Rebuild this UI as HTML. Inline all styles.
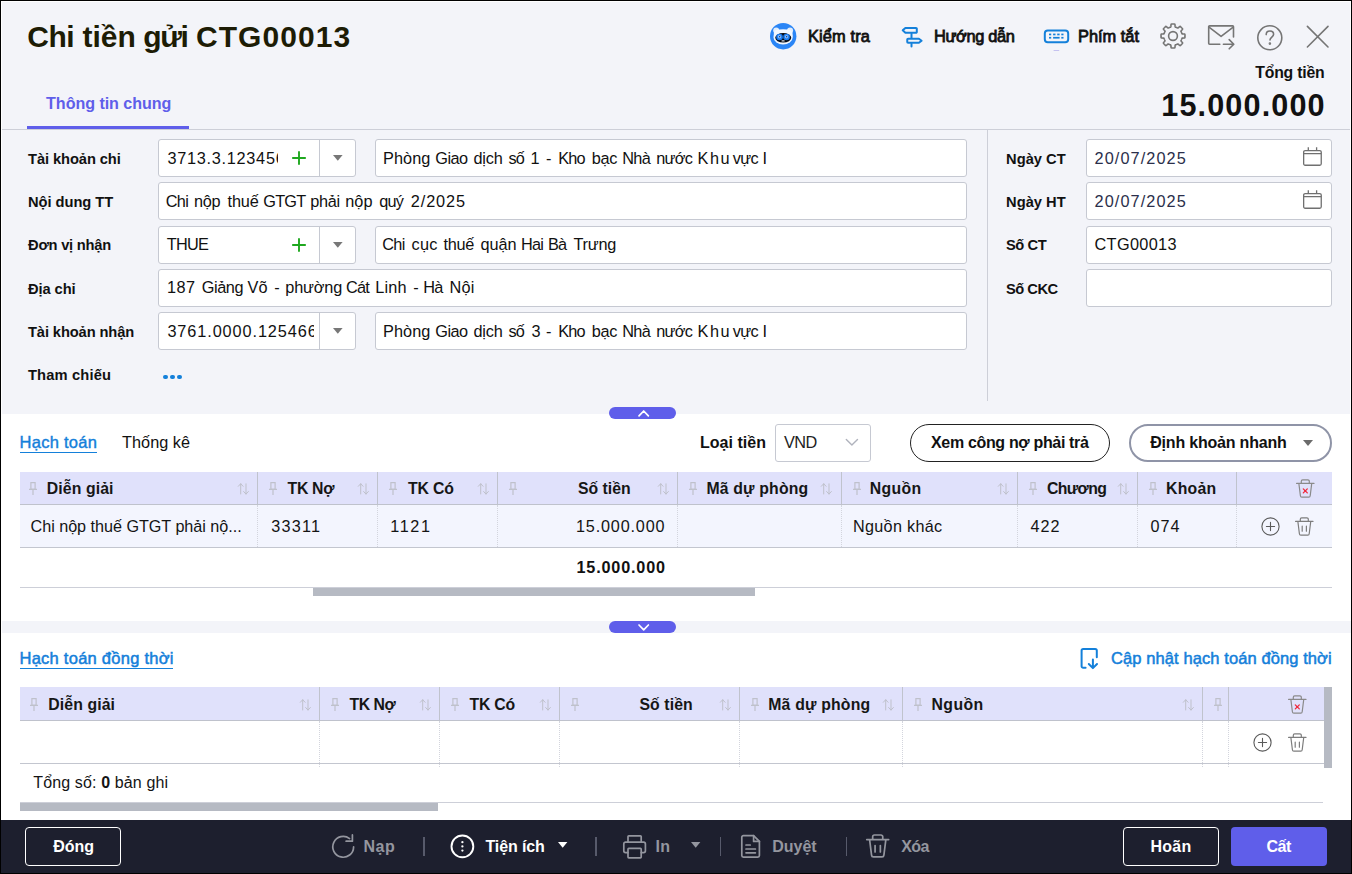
<!DOCTYPE html><html><head><meta charset="utf-8"><title>Chi tiền gửi CTG00013</title>
<style>
html,body{margin:0;padding:0}
body{width:1352px;height:874px;position:relative;overflow:hidden;background:#f3f4f9;font-family:"Liberation Sans", sans-serif;color:#141414}
.a{position:absolute}
.box{position:absolute;box-sizing:border-box;background:#fff;border:1px solid #c6c9d2;border-radius:3px}
svg{position:absolute;overflow:visible}
.hl{position:absolute;height:1px;background:#c6c9d2}
.vl{position:absolute;width:1px;background:#c6c9d2}
.vd{position:absolute;width:0;border-left:1px dotted #d3d5dd}
</style></head><body>
<div class="a" style="left:0;top:414px;width:1352px;height:207px;background:#fff"></div><div class="a" style="left:0;top:633px;width:1352px;height:187px;background:#fff"></div><div class="a" style="left:0;top:820px;width:1352px;height:54px;background:#1d1f2e"></div><span style="position:absolute;left:27.30px;top:22.00px;font-size:30px;line-height:30px;font-weight:700;color:#1d1c05;white-space:nowrap;letter-spacing:-0.520px;">Chi</span><span style="position:absolute;left:82.50px;top:22.00px;font-size:30px;line-height:30px;font-weight:700;color:#1d1c05;white-space:nowrap;">tiền</span><span style="position:absolute;left:143.20px;top:22.00px;font-size:30px;line-height:30px;font-weight:700;color:#1d1c05;white-space:nowrap;letter-spacing:-1.350px;">gửi</span><span style="position:absolute;left:196.00px;top:22.00px;font-size:30px;line-height:30px;font-weight:700;color:#1d1c05;white-space:nowrap;letter-spacing:1.062px;">CTG00013</span><svg style="left:769.85px;top:22.75px" width="26.4" height="26.4" viewBox="0 0 26.4 26.4">
<circle cx="13.2" cy="13.2" r="13.2" fill="#2a85f6"/>
<circle cx="6.2" cy="7.6" r="3" fill="#e0edfd"/><circle cx="20.1" cy="7.6" r="3" fill="#e0edfd"/>
<rect x="3.8" y="6.55" width="18.8" height="10" rx="4.2" fill="#f1f7ff"/>
<ellipse cx="13.1" cy="14" rx="9.7" ry="7.4" fill="#f1f7ff"/>
<ellipse cx="13.25" cy="14.8" rx="8" ry="4.8" fill="#050a14"/>
<circle cx="9.55" cy="13.95" r="3.3" fill="#1a7cf2"/><circle cx="16.55" cy="13.95" r="3.3" fill="#1a7cf2"/>
<circle cx="9.55" cy="13.8" r="1.7" fill="#86bdff"/><circle cx="16.55" cy="13.8" r="1.7" fill="#86bdff"/>
<circle cx="9.65" cy="13.7" r="0.65" fill="#1d2a55"/><circle cx="16.65" cy="13.7" r="0.65" fill="#1d2a55"/>
<rect x="11.5" y="17.3" width="3.2" height="1.2" rx="0.5" fill="#cdd5e0"/>
</svg><span style="position:absolute;left:808.05px;top:28.00px;font-size:16.4px;line-height:16.4px;font-weight:400;color:#111;white-space:nowrap;letter-spacing:0.106px;-webkit-text-stroke:0.8px #111;">Kiểm tra</span><svg style="left:900px;top:25px" width="24" height="24" viewBox="0 0 24 24" fill="none" stroke="#1480da" stroke-width="2" stroke-linejoin="round" stroke-linecap="round">
<path d="M5.4 2.9H16a.8.8 0 0 1 .8.8v3.2a.8.8 0 0 1-.8.8H5.4L2.7 5.3z"/>
<path d="M18.9 13.75H8.05a.8.8 0 0 0-.8.8v2.4a.8.8 0 0 0 .8.8H18.9l2.7-2z"/>
<path d="M11.5 8.7v4.1M11.5 18.7v2.9"/></svg><span style="position:absolute;left:933.90px;top:28.00px;font-size:16.4px;line-height:16.4px;font-weight:400;color:#111;white-space:nowrap;letter-spacing:-0.347px;-webkit-text-stroke:0.8px #111;">Hướng dẫn</span><svg style="left:1043px;top:28px" width="28" height="24" viewBox="0 0 28 24" fill="none">
<rect x="1.8" y="2.4" width="23.4" height="11.8" rx="3" stroke="#1480da" stroke-width="2"/>
<g fill="#1480da"><rect x="6" y="5.6" width="2.2" height="1.7"/><rect x="10.1" y="5.6" width="2.4" height="1.7"/><rect x="14.2" y="5.6" width="2.4" height="1.7"/><rect x="18.3" y="5.6" width="2.2" height="1.7"/>
<rect x="6" y="8.9" width="2.2" height="1.7"/><rect x="10.1" y="8.9" width="6.5" height="1.7"/><rect x="18.3" y="8.9" width="2.2" height="1.7"/></g>
<rect x="10.6" y="22" width="5.6" height="0.8" fill="#b9b6ee"/></svg><span style="position:absolute;left:1078.05px;top:28.00px;font-size:16.4px;line-height:16.4px;font-weight:400;color:#111;white-space:nowrap;letter-spacing:-0.011px;-webkit-text-stroke:0.8px #111;">Phím tắt</span><svg style="left:1160.4px;top:23.3px" width="26" height="26" viewBox="0 0 26 26" fill="none" stroke="#757575" stroke-width="1.6" stroke-linejoin="round">
<path d="M13.00 1.00 L13.31 1.00 L13.63 1.02 L13.94 1.04 L14.25 1.07 L14.57 1.10 L14.86 1.25 L15.03 2.05 L15.09 3.16 L15.17 3.96 L15.38 4.11 L15.61 4.18 L15.84 4.25 L16.07 4.33 L16.30 4.41 L16.52 4.50 L16.74 4.60 L16.96 4.70 L17.18 4.80 L17.39 4.91 L17.60 5.03 L17.86 5.07 L18.48 4.56 L19.31 3.82 L19.99 3.37 L20.31 3.48 L20.55 3.67 L20.79 3.88 L21.03 4.08 L21.26 4.30 L21.49 4.51 L21.70 4.74 L21.92 4.97 L22.12 5.21 L22.33 5.45 L22.52 5.69 L22.63 6.01 L22.18 6.69 L21.44 7.52 L20.93 8.14 L20.97 8.40 L21.09 8.61 L21.20 8.82 L21.30 9.04 L21.40 9.26 L21.50 9.48 L21.59 9.70 L21.67 9.93 L21.75 10.16 L21.82 10.39 L21.89 10.62 L22.04 10.83 L22.84 10.91 L23.95 10.97 L24.75 11.14 L24.90 11.43 L24.93 11.75 L24.96 12.06 L24.98 12.37 L25.00 12.69 L25.00 13.00 L25.00 13.31 L24.98 13.63 L24.96 13.94 L24.93 14.25 L24.90 14.57 L24.75 14.86 L23.95 15.03 L22.84 15.09 L22.04 15.17 L21.89 15.38 L21.82 15.61 L21.75 15.84 L21.67 16.07 L21.59 16.30 L21.50 16.52 L21.40 16.74 L21.30 16.96 L21.20 17.18 L21.09 17.39 L20.97 17.60 L20.93 17.86 L21.44 18.48 L22.18 19.31 L22.63 19.99 L22.52 20.31 L22.33 20.55 L22.12 20.79 L21.92 21.03 L21.70 21.26 L21.49 21.49 L21.26 21.70 L21.03 21.92 L20.79 22.12 L20.55 22.33 L20.31 22.52 L19.99 22.63 L19.31 22.18 L18.48 21.44 L17.86 20.93 L17.60 20.97 L17.39 21.09 L17.18 21.20 L16.96 21.30 L16.74 21.40 L16.52 21.50 L16.30 21.59 L16.07 21.67 L15.84 21.75 L15.61 21.82 L15.38 21.89 L15.17 22.04 L15.09 22.84 L15.03 23.95 L14.86 24.75 L14.57 24.90 L14.25 24.93 L13.94 24.96 L13.63 24.98 L13.31 25.00 L13.00 25.00 L12.69 25.00 L12.37 24.98 L12.06 24.96 L11.75 24.93 L11.43 24.90 L11.14 24.75 L10.97 23.95 L10.91 22.84 L10.83 22.04 L10.62 21.89 L10.39 21.82 L10.16 21.75 L9.93 21.67 L9.70 21.59 L9.48 21.50 L9.26 21.40 L9.04 21.30 L8.82 21.20 L8.61 21.09 L8.40 20.97 L8.14 20.93 L7.52 21.44 L6.69 22.18 L6.01 22.63 L5.69 22.52 L5.45 22.33 L5.21 22.12 L4.97 21.92 L4.74 21.70 L4.51 21.49 L4.30 21.26 L4.08 21.03 L3.88 20.79 L3.67 20.55 L3.48 20.31 L3.37 19.99 L3.82 19.31 L4.56 18.48 L5.07 17.86 L5.03 17.60 L4.91 17.39 L4.80 17.18 L4.70 16.96 L4.60 16.74 L4.50 16.52 L4.41 16.30 L4.33 16.07 L4.25 15.84 L4.18 15.61 L4.11 15.38 L3.96 15.17 L3.16 15.09 L2.05 15.03 L1.25 14.86 L1.10 14.57 L1.07 14.25 L1.04 13.94 L1.02 13.63 L1.00 13.31 L1.00 13.00 L1.00 12.69 L1.02 12.37 L1.04 12.06 L1.07 11.75 L1.10 11.43 L1.25 11.14 L2.05 10.97 L3.16 10.91 L3.96 10.83 L4.11 10.62 L4.18 10.39 L4.25 10.16 L4.33 9.93 L4.41 9.70 L4.50 9.48 L4.60 9.26 L4.70 9.04 L4.80 8.82 L4.91 8.61 L5.03 8.40 L5.07 8.14 L4.56 7.52 L3.82 6.69 L3.37 6.01 L3.48 5.69 L3.67 5.45 L3.88 5.21 L4.08 4.97 L4.30 4.74 L4.51 4.51 L4.74 4.30 L4.97 4.08 L5.21 3.88 L5.45 3.67 L5.69 3.48 L6.01 3.37 L6.69 3.82 L7.52 4.56 L8.14 5.07 L8.40 5.03 L8.61 4.91 L8.82 4.80 L9.04 4.70 L9.26 4.60 L9.48 4.50 L9.70 4.41 L9.93 4.33 L10.16 4.25 L10.39 4.18 L10.62 4.11 L10.83 3.96 L10.91 3.16 L10.97 2.05 L11.14 1.25 L11.43 1.10 L11.75 1.07 L12.06 1.04 L12.37 1.02 L12.69 1.00Z"/><circle cx="13" cy="13" r="4.4"/></svg><svg style="left:1207px;top:24px" width="30" height="28" viewBox="0 0 30 28" fill="none" stroke="#757575" stroke-width="1.6" stroke-linecap="round" stroke-linejoin="round">
<path d="M12.8 20.2H2.6a.9.9 0 0 1-.9-.9V2.8a.9.9 0 0 1 .9-.9h23a.9.9 0 0 1 .9.9V13"/>
<path d="M2 3.2l12.1 9.2L26.2 3.2"/>
<path d="M16.4 20.2h10.2M22.2 15.6l4.6 4.6-4.6 4.6"/></svg><svg style="left:1256px;top:23.6px" width="28" height="28" viewBox="0 0 28 28" fill="none" stroke="#757575" stroke-width="1.6" stroke-linecap="round">
<circle cx="13.8" cy="13.8" r="12"/><path d="M10.2 10.6c0-2.2 1.6-3.6 3.7-3.6 2.2 0 3.7 1.4 3.7 3.3 0 2.6-3.6 2.9-3.6 5.6"/><circle cx="13.9" cy="19.6" r="0.5" fill="#757575"/></svg><svg style="left:1306px;top:25px" width="24" height="24" viewBox="0 0 24 24" fill="none" stroke="#757575" stroke-width="1.6" stroke-linecap="round"><path d="M1.4 1.4l20.6 20.6M22 1.4L1.4 22"/></svg><span style="position:absolute;left:1255.25px;top:65.00px;font-size:15.8px;line-height:15.8px;font-weight:700;color:#111;white-space:nowrap;letter-spacing:-0.209px;">Tổng tiền</span><span style="position:absolute;left:1161.25px;top:90.00px;font-size:30.6px;line-height:30.6px;font-weight:700;color:#111;white-space:nowrap;letter-spacing:1.139px;">15.000.000</span><span style="position:absolute;left:46.10px;top:95.00px;font-size:16.1px;line-height:16.1px;font-weight:700;color:#5f5eea;white-space:nowrap;letter-spacing:-0.057px;">Thông tin chung</span><div class="a" style="left:0;top:129px;width:1352px;height:1px;background:#cdcfd8"></div><div class="a" style="left:27px;top:126px;width:162px;height:3px;background:#5f5eea"></div><span style="position:absolute;left:28.00px;top:152.00px;font-size:14.7px;line-height:14.7px;font-weight:700;color:#111;white-space:nowrap;letter-spacing:-0.085px;">Tài khoản chi</span><span style="position:absolute;left:28.00px;top:195.00px;font-size:14.7px;line-height:14.7px;font-weight:700;color:#111;white-space:nowrap;letter-spacing:-0.043px;">Nội dung TT</span><span style="position:absolute;left:28.00px;top:238.00px;font-size:14.7px;line-height:14.7px;font-weight:700;color:#111;white-space:nowrap;letter-spacing:-0.229px;">Đơn vị nhận</span><span style="position:absolute;left:28.00px;top:282.00px;font-size:14.7px;line-height:14.7px;font-weight:700;color:#111;white-space:nowrap;letter-spacing:-0.096px;">Địa chỉ</span><span style="position:absolute;left:28.00px;top:325.00px;font-size:14.7px;line-height:14.7px;font-weight:700;color:#111;white-space:nowrap;letter-spacing:-0.115px;">Tài khoản nhận</span><span style="position:absolute;left:28.00px;top:368.00px;font-size:14.7px;line-height:14.7px;font-weight:700;color:#111;white-space:nowrap;letter-spacing:0.151px;">Tham chiếu</span><div class="box" style="left:158px;top:139px;width:198px;height:38px"></div><div class="vl" style="left:319px;top:140px;height:36px"></div><div class="a" style="left:159px;top:140px;width:118.80000000000001px;height:36px;overflow:hidden"><span style="position:absolute;left:8.40px;top:10.00px;font-size:16.3px;line-height:16.3px;font-weight:400;color:#111;white-space:nowrap;letter-spacing:0.724px;">3713.3.123456</span></div><svg style="left:292px;top:151.0px" width="14" height="14" viewBox="0 0 14 14" stroke="#1fa81f" stroke-width="1.9" stroke-linecap="round"><path d="M7 0.9v12.2M0.9 7h12.2"/></svg><svg style="left:333.30px;top:155.10px" width="9.6" height="5.8" viewBox="0 0 9.6 5.8"><path d="M0 0H9.6L4.8 5.8z" fill="#777"/></svg><div class="box" style="left:375px;top:139px;width:592px;height:38px"></div><span style="position:absolute;left:383.00px;top:150.00px;font-size:16.3px;line-height:16.3px;font-weight:400;color:#111;white-space:nowrap;letter-spacing:0.056px;">Phòng</span><span style="position:absolute;left:435.25px;top:150.00px;font-size:16.3px;line-height:16.3px;font-weight:400;color:#111;white-space:nowrap;letter-spacing:-0.529px;">Giao</span><span style="position:absolute;left:473.50px;top:150.00px;font-size:16.3px;line-height:16.3px;font-weight:400;color:#111;white-space:nowrap;letter-spacing:-0.188px;">dịch</span><span style="position:absolute;left:508.42px;top:150.00px;font-size:16.3px;line-height:16.3px;font-weight:400;color:#111;white-space:nowrap;letter-spacing:-0.734px;">số</span><span style="position:absolute;left:530.50px;top:150.00px;font-size:16.3px;line-height:16.3px;font-weight:400;color:#111;white-space:nowrap;">1</span><span style="position:absolute;left:546.00px;top:150.00px;font-size:16.3px;line-height:16.3px;font-weight:400;color:#111;white-space:nowrap;">-</span><span style="position:absolute;left:558.15px;top:150.00px;font-size:16.3px;line-height:16.3px;font-weight:400;color:#111;white-space:nowrap;letter-spacing:-0.734px;">Kho</span><span style="position:absolute;left:591.75px;top:150.00px;font-size:16.3px;line-height:16.3px;font-weight:400;color:#111;white-space:nowrap;letter-spacing:-0.305px;">bạc</span><span style="position:absolute;left:622.33px;top:150.00px;font-size:16.3px;line-height:16.3px;font-weight:400;color:#111;white-space:nowrap;letter-spacing:-0.734px;">Nhà</span><span style="position:absolute;left:656.28px;top:150.00px;font-size:16.3px;line-height:16.3px;font-weight:400;color:#111;white-space:nowrap;letter-spacing:-0.734px;">nước</span><span style="position:absolute;left:697.50px;top:150.00px;font-size:16.3px;line-height:16.3px;font-weight:400;color:#111;white-space:nowrap;letter-spacing:1.543px;">Khu</span><span style="position:absolute;left:732.84px;top:150.00px;font-size:16.3px;line-height:16.3px;font-weight:400;color:#111;white-space:nowrap;letter-spacing:-0.734px;">vực</span><span style="position:absolute;left:762.60px;top:150.00px;font-size:16.3px;line-height:16.3px;font-weight:400;color:#111;white-space:nowrap;">I</span><div class="box" style="left:158px;top:182px;width:809px;height:38px"></div><span style="position:absolute;left:165.83px;top:193.00px;font-size:16.3px;line-height:16.3px;font-weight:400;color:#111;white-space:nowrap;letter-spacing:-0.734px;">Chi</span><span style="position:absolute;left:194.00px;top:193.00px;font-size:16.3px;line-height:16.3px;font-weight:400;color:#111;white-space:nowrap;letter-spacing:-0.305px;">nộp</span><span style="position:absolute;left:227.50px;top:193.00px;font-size:16.3px;line-height:16.3px;font-weight:400;color:#111;white-space:nowrap;letter-spacing:-0.128px;">thuế</span><span style="position:absolute;left:263.21px;top:193.00px;font-size:16.3px;line-height:16.3px;font-weight:400;color:#111;white-space:nowrap;letter-spacing:-0.734px;">GTGT</span><span style="position:absolute;left:310.25px;top:193.00px;font-size:16.3px;line-height:16.3px;font-weight:400;color:#111;white-space:nowrap;letter-spacing:-0.305px;">phải</span><span style="position:absolute;left:345.25px;top:193.00px;font-size:16.3px;line-height:16.3px;font-weight:400;color:#111;white-space:nowrap;letter-spacing:0.070px;">nộp</span><span style="position:absolute;left:379.18px;top:193.00px;font-size:16.3px;line-height:16.3px;font-weight:400;color:#111;white-space:nowrap;letter-spacing:-0.734px;">quý</span><span style="position:absolute;left:410.75px;top:193.00px;font-size:16.3px;line-height:16.3px;font-weight:400;color:#111;white-space:nowrap;letter-spacing:0.901px;">2/2025</span><div class="box" style="left:158px;top:226px;width:198px;height:38px"></div><div class="vl" style="left:319px;top:227px;height:36px"></div><div class="a" style="left:159px;top:227px;width:119px;height:36px;overflow:hidden"><span style="position:absolute;left:7.77px;top:9.00px;font-size:16.3px;line-height:16.3px;font-weight:400;color:#111;white-space:nowrap;letter-spacing:-0.734px;">THUE</span></div><svg style="left:292px;top:238.0px" width="14" height="14" viewBox="0 0 14 14" stroke="#1fa81f" stroke-width="1.9" stroke-linecap="round"><path d="M7 0.9v12.2M0.9 7h12.2"/></svg><svg style="left:333.30px;top:242.10px" width="9.6" height="5.8" viewBox="0 0 9.6 5.8"><path d="M0 0H9.6L4.8 5.8z" fill="#777"/></svg><div class="box" style="left:375px;top:226px;width:592px;height:38px"></div><span style="position:absolute;left:382.33px;top:236.00px;font-size:16.3px;line-height:16.3px;font-weight:400;color:#111;white-space:nowrap;letter-spacing:-0.734px;">Chi</span><span style="position:absolute;left:411.50px;top:236.00px;font-size:16.3px;line-height:16.3px;font-weight:400;color:#111;white-space:nowrap;letter-spacing:0.277px;">cục</span><span style="position:absolute;left:443.50px;top:236.00px;font-size:16.3px;line-height:16.3px;font-weight:400;color:#111;white-space:nowrap;letter-spacing:-0.294px;">thuế</span><span style="position:absolute;left:480.50px;top:236.00px;font-size:16.3px;line-height:16.3px;font-weight:400;color:#111;white-space:nowrap;letter-spacing:-0.055px;">quận</span><span style="position:absolute;left:520.95px;top:236.00px;font-size:16.3px;line-height:16.3px;font-weight:400;color:#111;white-space:nowrap;letter-spacing:-0.734px;">Hai</span><span style="position:absolute;left:547.94px;top:236.00px;font-size:16.3px;line-height:16.3px;font-weight:400;color:#111;white-space:nowrap;letter-spacing:-0.734px;">Bà</span><span style="position:absolute;left:573.50px;top:236.00px;font-size:16.3px;line-height:16.3px;font-weight:400;color:#111;white-space:nowrap;letter-spacing:-0.242px;">Trưng</span><div class="box" style="left:158px;top:269px;width:809px;height:38px"></div><span style="position:absolute;left:167.00px;top:279.00px;font-size:16.3px;line-height:16.3px;font-weight:400;color:#111;white-space:nowrap;letter-spacing:0.445px;">187</span><span style="position:absolute;left:201.75px;top:279.00px;font-size:16.3px;line-height:16.3px;font-weight:400;color:#111;white-space:nowrap;letter-spacing:-0.410px;">Giảng</span><span style="position:absolute;left:247.50px;top:279.00px;font-size:16.3px;line-height:16.3px;font-weight:400;color:#111;white-space:nowrap;letter-spacing:0.141px;">Võ</span><span style="position:absolute;left:274.25px;top:279.00px;font-size:16.3px;line-height:16.3px;font-weight:400;color:#111;white-space:nowrap;">-</span><span style="position:absolute;left:285.25px;top:279.00px;font-size:16.3px;line-height:16.3px;font-weight:400;color:#111;white-space:nowrap;letter-spacing:-0.148px;">phường</span><span style="position:absolute;left:345.95px;top:279.00px;font-size:16.3px;line-height:16.3px;font-weight:400;color:#111;white-space:nowrap;letter-spacing:-0.734px;">Cát</span><span style="position:absolute;left:375.25px;top:279.00px;font-size:16.3px;line-height:16.3px;font-weight:400;color:#111;white-space:nowrap;letter-spacing:0.174px;">Linh</span><span style="position:absolute;left:413.25px;top:279.00px;font-size:16.3px;line-height:16.3px;font-weight:400;color:#111;white-space:nowrap;">-</span><span style="position:absolute;left:423.24px;top:279.00px;font-size:16.3px;line-height:16.3px;font-weight:400;color:#111;white-space:nowrap;letter-spacing:-0.734px;">Hà</span><span style="position:absolute;left:449.50px;top:279.00px;font-size:16.3px;line-height:16.3px;font-weight:400;color:#111;white-space:nowrap;letter-spacing:0.219px;">Nội</span><div class="box" style="left:158px;top:312px;width:198px;height:38px"></div><div class="vl" style="left:319px;top:313px;height:36px"></div><div class="a" style="left:159px;top:313px;width:155px;height:36px;overflow:hidden"><span style="position:absolute;left:8.40px;top:10.00px;font-size:16.3px;line-height:16.3px;font-weight:400;color:#111;white-space:nowrap;letter-spacing:0.903px;">3761.0000.1254667</span></div><svg style="left:333.30px;top:328.10px" width="9.6" height="5.8" viewBox="0 0 9.6 5.8"><path d="M0 0H9.6L4.8 5.8z" fill="#777"/></svg><div class="box" style="left:375px;top:312px;width:592px;height:38px"></div><span style="position:absolute;left:383.00px;top:323.00px;font-size:16.3px;line-height:16.3px;font-weight:400;color:#111;white-space:nowrap;letter-spacing:0.056px;">Phòng</span><span style="position:absolute;left:435.25px;top:323.00px;font-size:16.3px;line-height:16.3px;font-weight:400;color:#111;white-space:nowrap;letter-spacing:-0.529px;">Giao</span><span style="position:absolute;left:473.50px;top:323.00px;font-size:16.3px;line-height:16.3px;font-weight:400;color:#111;white-space:nowrap;letter-spacing:-0.188px;">dịch</span><span style="position:absolute;left:508.42px;top:323.00px;font-size:16.3px;line-height:16.3px;font-weight:400;color:#111;white-space:nowrap;letter-spacing:-0.734px;">số</span><span style="position:absolute;left:531.50px;top:323.00px;font-size:16.3px;line-height:16.3px;font-weight:400;color:#111;white-space:nowrap;">3</span><span style="position:absolute;left:546.00px;top:323.00px;font-size:16.3px;line-height:16.3px;font-weight:400;color:#111;white-space:nowrap;">-</span><span style="position:absolute;left:558.15px;top:323.00px;font-size:16.3px;line-height:16.3px;font-weight:400;color:#111;white-space:nowrap;letter-spacing:-0.734px;">Kho</span><span style="position:absolute;left:591.75px;top:323.00px;font-size:16.3px;line-height:16.3px;font-weight:400;color:#111;white-space:nowrap;letter-spacing:-0.305px;">bạc</span><span style="position:absolute;left:622.33px;top:323.00px;font-size:16.3px;line-height:16.3px;font-weight:400;color:#111;white-space:nowrap;letter-spacing:-0.734px;">Nhà</span><span style="position:absolute;left:656.28px;top:323.00px;font-size:16.3px;line-height:16.3px;font-weight:400;color:#111;white-space:nowrap;letter-spacing:-0.734px;">nước</span><span style="position:absolute;left:697.50px;top:323.00px;font-size:16.3px;line-height:16.3px;font-weight:400;color:#111;white-space:nowrap;letter-spacing:1.543px;">Khu</span><span style="position:absolute;left:732.84px;top:323.00px;font-size:16.3px;line-height:16.3px;font-weight:400;color:#111;white-space:nowrap;letter-spacing:-0.734px;">vực</span><span style="position:absolute;left:762.60px;top:323.00px;font-size:16.3px;line-height:16.3px;font-weight:400;color:#111;white-space:nowrap;">I</span><div class="a" style="left:162.9px;top:374.5px;width:4.8px;height:4.8px;border-radius:50%;background:#1480da"></div><div class="a" style="left:170.0px;top:374.5px;width:4.8px;height:4.8px;border-radius:50%;background:#1480da"></div><div class="a" style="left:177.1px;top:374.5px;width:4.8px;height:4.8px;border-radius:50%;background:#1480da"></div><div class="vl" style="left:986.5px;top:130px;height:271px;background:#cdcfd8"></div><span style="position:absolute;left:1006.00px;top:152.00px;font-size:14.7px;line-height:14.7px;font-weight:700;color:#111;white-space:nowrap;letter-spacing:0.024px;">Ngày CT</span><span style="position:absolute;left:1006.00px;top:195.00px;font-size:14.7px;line-height:14.7px;font-weight:700;color:#111;white-space:nowrap;letter-spacing:0.024px;">Ngày HT</span><span style="position:absolute;left:1006.00px;top:238.00px;font-size:14.7px;line-height:14.7px;font-weight:700;color:#111;white-space:nowrap;letter-spacing:-0.426px;">Số CT</span><span style="position:absolute;left:1006.00px;top:282.00px;font-size:14.7px;line-height:14.7px;font-weight:700;color:#111;white-space:nowrap;letter-spacing:-0.512px;">Số CKC</span><div class="box" style="left:1086px;top:139px;width:246px;height:38px"></div><span style="position:absolute;left:1094.50px;top:150.00px;font-size:16.3px;line-height:16.3px;font-weight:400;color:#2b2f4b;white-space:nowrap;letter-spacing:1.091px;">20/07/2025</span><svg style="left:1302px;top:146px" width="22" height="24" viewBox="0 0 22 24" fill="none" stroke="#707070" stroke-width="1.3" stroke-linejoin="round" stroke-linecap="butt">
<rect x="1.65" y="4.55" width="17.6" height="14.7" rx="1.5"/><path d="M1.65 7.55h17.6M6.3 1.2v3.5M14.6 1.2v3.5"/></svg><div class="box" style="left:1086px;top:182px;width:246px;height:38px"></div><span style="position:absolute;left:1094.50px;top:193.00px;font-size:16.3px;line-height:16.3px;font-weight:400;color:#2b2f4b;white-space:nowrap;letter-spacing:1.091px;">20/07/2025</span><svg style="left:1302px;top:189px" width="22" height="24" viewBox="0 0 22 24" fill="none" stroke="#707070" stroke-width="1.3" stroke-linejoin="round" stroke-linecap="butt">
<rect x="1.65" y="4.55" width="17.6" height="14.7" rx="1.5"/><path d="M1.65 7.55h17.6M6.3 1.2v3.5M14.6 1.2v3.5"/></svg><div class="box" style="left:1086px;top:226px;width:246px;height:38px"></div><span style="position:absolute;left:1094.50px;top:236.00px;font-size:16.3px;line-height:16.3px;font-weight:400;color:#111;white-space:nowrap;letter-spacing:0.345px;">CTG00013</span><div class="box" style="left:1086px;top:269px;width:246px;height:38px"></div><div class="a" style="left:609px;top:407px;width:67px;height:12px;border-radius:6px;background:#5f5eea"></div><svg style="left:638px;top:409.6px" width="11.4" height="6.8" viewBox="0 0 11.4 6.8" fill="none" stroke="#fff" stroke-width="1.7" stroke-linecap="round" stroke-linejoin="round"><path d="M1 5.8L5.7 1l4.700 4.800"/></svg><div class="a" style="left:609px;top:621px;width:67px;height:12px;border-radius:6px;background:#5f5eea"></div><svg style="left:638px;top:623.6px" width="11.4" height="6.8" viewBox="0 0 11.4 6.8" fill="none" stroke="#fff" stroke-width="1.7" stroke-linecap="round" stroke-linejoin="round"><path d="M1 1l4.700 4.800L10.400 1"/></svg><span style="position:absolute;left:19.50px;top:434.00px;font-size:16.5px;line-height:16.5px;font-weight:400;color:#1480da;white-space:nowrap;letter-spacing:0.276px;-webkit-text-stroke:0.4px #1480da;">Hạch toán</span><div class="a" style="left:20px;top:452px;width:77px;height:1px;background:#1480da"></div><span style="position:absolute;left:122.00px;top:434.00px;font-size:16.3px;line-height:16.3px;font-weight:400;color:#111;white-space:nowrap;letter-spacing:0.024px;">Thống kê</span><span style="position:absolute;left:700.00px;top:435.00px;font-size:16.0px;line-height:16.0px;font-weight:700;color:#111;white-space:nowrap;letter-spacing:0.030px;">Loại tiền</span><div class="box" style="left:775px;top:424px;width:96px;height:38px"></div><span style="position:absolute;left:784.00px;top:434.00px;font-size:16.3px;line-height:16.3px;font-weight:400;color:#222;white-space:nowrap;letter-spacing:-0.559px;">VND</span><svg style="left:845px;top:438px" width="14" height="9" viewBox="0 0 14 9" fill="none" stroke="#b0b3bd" stroke-width="1.4" stroke-linecap="round" stroke-linejoin="round"><path d="M1.3 1.4l5.6 5.6 5.6-5.6"/></svg><div class="a" style="left:910px;top:424px;width:200px;height:38px;box-sizing:border-box;border:1px solid #222;border-radius:19px;background:#fff"></div><span style="position:absolute;left:931.00px;top:435.00px;font-size:16.0px;line-height:16.0px;font-weight:700;color:#111;white-space:nowrap;letter-spacing:-0.336px;">Xem công nợ phải trả</span><div class="a" style="left:1129px;top:424px;width:203px;height:38px;box-sizing:border-box;border:2px solid #8f94a7;border-radius:19px;background:#fff"></div><span style="position:absolute;left:1150.25px;top:435.00px;font-size:16.0px;line-height:16.0px;font-weight:700;color:#111;white-space:nowrap;letter-spacing:-0.202px;">Định khoản nhanh</span><svg style="left:1303.20px;top:440.00px" width="10" height="6" viewBox="0 0 10 6"><path d="M0 0H10L5.0 6z" fill="#6b6b6b"/></svg><div class="a" style="left:20px;top:472px;width:1312px;height:32px;background:#e0e1fb"></div><div class="a" style="left:20px;top:504px;width:1312px;height:1px;background:#bfc2cc"></div><div class="a" style="left:20px;top:505px;width:1312px;height:42px;background:#f3f5fe"></div><div class="a" style="left:20px;top:547px;width:1312px;height:1px;background:#c3c6cf"></div><div class="vl" style="left:257px;top:472px;height:32px;background:#c0c3cd"></div><div class="vd" style="left:257px;top:505px;height:42px"></div><div class="vl" style="left:377px;top:472px;height:32px;background:#c0c3cd"></div><div class="vd" style="left:377px;top:505px;height:42px"></div><div class="vl" style="left:497px;top:472px;height:32px;background:#c0c3cd"></div><div class="vd" style="left:497px;top:505px;height:42px"></div><div class="vl" style="left:677px;top:472px;height:32px;background:#c0c3cd"></div><div class="vd" style="left:677px;top:505px;height:42px"></div><div class="vl" style="left:841px;top:472px;height:32px;background:#c0c3cd"></div><div class="vd" style="left:841px;top:505px;height:42px"></div><div class="vl" style="left:1017px;top:472px;height:32px;background:#c0c3cd"></div><div class="vd" style="left:1017px;top:505px;height:42px"></div><div class="vl" style="left:1137px;top:472px;height:32px;background:#c0c3cd"></div><div class="vd" style="left:1137px;top:505px;height:42px"></div><div class="vl" style="left:1236px;top:472px;height:32px;background:#c0c3cd"></div><div class="vd" style="left:1236px;top:505px;height:42px"></div><svg style="left:29.2px;top:482px" width="8" height="13" viewBox="0 0 8 13" fill="none" stroke="#bfc1cb" stroke-width="1.2"><path d="M1.9 0.6h4.2v6.6H1.9zM0 7.3h8M4 7.6v5.4"/></svg><span style="position:absolute;left:46.75px;top:481.00px;font-size:15.8px;line-height:15.8px;font-weight:700;color:#161616;white-space:nowrap;letter-spacing:0.113px;">Diễn giải</span><svg style="left:237.5px;top:483px" width="11" height="12" viewBox="0 0 11 12" fill="none" stroke="#bfc1cb" stroke-width="1" stroke-linecap="round" stroke-linejoin="round"><path d="M2.7 11V0.8M0.3 3.3L2.7 0.7l2.4 2.6M8 0.8V11M5.6 8.5L8 11.1l2.4-2.6"/></svg><svg style="left:268.7px;top:482px" width="8" height="13" viewBox="0 0 8 13" fill="none" stroke="#bfc1cb" stroke-width="1.2"><path d="M1.9 0.6h4.2v6.6H1.9zM0 7.3h8M4 7.6v5.4"/></svg><span style="position:absolute;left:287.60px;top:481.00px;font-size:15.8px;line-height:15.8px;font-weight:700;color:#161616;white-space:nowrap;letter-spacing:-0.314px;">TK Nợ</span><svg style="left:357.5px;top:483px" width="11" height="12" viewBox="0 0 11 12" fill="none" stroke="#bfc1cb" stroke-width="1" stroke-linecap="round" stroke-linejoin="round"><path d="M2.7 11V0.8M0.3 3.3L2.7 0.7l2.4 2.6M8 0.8V11M5.6 8.5L8 11.1l2.4-2.6"/></svg><svg style="left:388.7px;top:482px" width="8" height="13" viewBox="0 0 8 13" fill="none" stroke="#bfc1cb" stroke-width="1.2"><path d="M1.9 0.6h4.2v6.6H1.9zM0 7.3h8M4 7.6v5.4"/></svg><span style="position:absolute;left:408.00px;top:481.00px;font-size:15.8px;line-height:15.8px;font-weight:700;color:#161616;white-space:nowrap;letter-spacing:-0.164px;">TK Có</span><svg style="left:477.5px;top:483px" width="11" height="12" viewBox="0 0 11 12" fill="none" stroke="#bfc1cb" stroke-width="1" stroke-linecap="round" stroke-linejoin="round"><path d="M2.7 11V0.8M0.3 3.3L2.7 0.7l2.4 2.6M8 0.8V11M5.6 8.5L8 11.1l2.4-2.6"/></svg><svg style="left:508.7px;top:482px" width="8" height="13" viewBox="0 0 8 13" fill="none" stroke="#bfc1cb" stroke-width="1.2"><path d="M1.9 0.6h4.2v6.6H1.9zM0 7.3h8M4 7.6v5.4"/></svg><svg style="left:657.5px;top:483px" width="11" height="12" viewBox="0 0 11 12" fill="none" stroke="#bfc1cb" stroke-width="1" stroke-linecap="round" stroke-linejoin="round"><path d="M2.7 11V0.8M0.3 3.3L2.7 0.7l2.4 2.6M8 0.8V11M5.6 8.5L8 11.1l2.4-2.6"/></svg><svg style="left:689.2px;top:482px" width="8" height="13" viewBox="0 0 8 13" fill="none" stroke="#bfc1cb" stroke-width="1.2"><path d="M1.9 0.6h4.2v6.6H1.9zM0 7.3h8M4 7.6v5.4"/></svg><span style="position:absolute;left:706.50px;top:481.00px;font-size:15.8px;line-height:15.8px;font-weight:700;color:#161616;white-space:nowrap;letter-spacing:0.159px;">Mã dự phòng</span><svg style="left:820.5px;top:483px" width="11" height="12" viewBox="0 0 11 12" fill="none" stroke="#bfc1cb" stroke-width="1" stroke-linecap="round" stroke-linejoin="round"><path d="M2.7 11V0.8M0.3 3.3L2.7 0.7l2.4 2.6M8 0.8V11M5.6 8.5L8 11.1l2.4-2.6"/></svg><svg style="left:852.7px;top:482px" width="8" height="13" viewBox="0 0 8 13" fill="none" stroke="#bfc1cb" stroke-width="1.2"><path d="M1.9 0.6h4.2v6.6H1.9zM0 7.3h8M4 7.6v5.4"/></svg><span style="position:absolute;left:869.75px;top:481.00px;font-size:15.8px;line-height:15.8px;font-weight:700;color:#161616;white-space:nowrap;letter-spacing:0.348px;">Nguồn</span><svg style="left:997.5px;top:483px" width="11" height="12" viewBox="0 0 11 12" fill="none" stroke="#bfc1cb" stroke-width="1" stroke-linecap="round" stroke-linejoin="round"><path d="M2.7 11V0.8M0.3 3.3L2.7 0.7l2.4 2.6M8 0.8V11M5.6 8.5L8 11.1l2.4-2.6"/></svg><svg style="left:1028.7px;top:482px" width="8" height="13" viewBox="0 0 8 13" fill="none" stroke="#bfc1cb" stroke-width="1.2"><path d="M1.9 0.6h4.2v6.6H1.9zM0 7.3h8M4 7.6v5.4"/></svg><span style="position:absolute;left:1047.00px;top:481.00px;font-size:15.8px;line-height:15.8px;font-weight:700;color:#161616;white-space:nowrap;letter-spacing:-0.625px;">Chương</span><svg style="left:1117.5px;top:483px" width="11" height="12" viewBox="0 0 11 12" fill="none" stroke="#bfc1cb" stroke-width="1" stroke-linecap="round" stroke-linejoin="round"><path d="M2.7 11V0.8M0.3 3.3L2.7 0.7l2.4 2.6M8 0.8V11M5.6 8.5L8 11.1l2.4-2.6"/></svg><svg style="left:1148.7px;top:482px" width="8" height="13" viewBox="0 0 8 13" fill="none" stroke="#bfc1cb" stroke-width="1.2"><path d="M1.9 0.6h4.2v6.6H1.9zM0 7.3h8M4 7.6v5.4"/></svg><span style="position:absolute;left:1166.00px;top:481.00px;font-size:15.8px;line-height:15.8px;font-weight:700;color:#161616;white-space:nowrap;letter-spacing:0.252px;">Khoản</span><span style="position:absolute;left:578.00px;top:481.00px;font-size:15.8px;line-height:15.8px;font-weight:700;color:#161616;white-space:nowrap;">Số tiền</span><svg style="left:1295.8px;top:479.3px" width="19" height="19" viewBox="0 0 19 19" fill="none" stroke="#8a8a8a" stroke-width="1.2" stroke-linecap="round" stroke-linejoin="round">
<path d="M0.6 4.4h17.4M5.3 4.2V2.2a1.4 1.4 0 0 1 1.4-1.4h5.2a1.4 1.4 0 0 1 1.4 1.4v2M2.9 4.8l1.5 12a1.5 1.5 0 0 0 1.5 1.4h6.8a1.5 1.5 0 0 0 1.5-1.4l1.5-12"/>
<path d="M7.3 9.9l4 4M11.3 9.9l-4 4" stroke="#f0293b" stroke-width="1.3"/></svg><span style="position:absolute;left:30.50px;top:518.00px;font-size:16.2px;line-height:16.2px;font-weight:400;color:#141414;white-space:nowrap;letter-spacing:-0.032px;">Chi nộp thuế GTGT phải nộ...</span><span style="position:absolute;left:271.25px;top:518.00px;font-size:16.2px;line-height:16.2px;font-weight:400;color:#141414;white-space:nowrap;letter-spacing:1.235px;">33311</span><span style="position:absolute;left:390.25px;top:518.00px;font-size:16.2px;line-height:16.2px;font-weight:400;color:#141414;white-space:nowrap;letter-spacing:1.648px;">1121</span><span style="position:absolute;left:576.00px;top:518.00px;font-size:16.2px;line-height:16.2px;font-weight:400;color:#141414;white-space:nowrap;letter-spacing:0.832px;">15.000.000</span><span style="position:absolute;left:853.00px;top:518.00px;font-size:16.2px;line-height:16.2px;font-weight:400;color:#141414;white-space:nowrap;letter-spacing:0.300px;">Nguồn khác</span><span style="position:absolute;left:1030.50px;top:518.00px;font-size:16.2px;line-height:16.2px;font-weight:400;color:#141414;white-space:nowrap;letter-spacing:0.997px;">422</span><span style="position:absolute;left:1150.50px;top:518.00px;font-size:16.2px;line-height:16.2px;font-weight:400;color:#141414;white-space:nowrap;letter-spacing:0.997px;">074</span><svg style="left:1261.0px;top:516.5px" width="19" height="19" viewBox="0 0 19 19" fill="none" stroke="#5a5a5a" stroke-width="1.1" stroke-linecap="round"><circle cx="9.5" cy="9.5" r="8.6"/><path d="M9.5 5.4v8.2M5.4 9.5h8.2"/></svg><svg style="left:1295.3px;top:516.6px" width="19.0" height="19.0" viewBox="0 0 19 19" fill="none" stroke="#7d7d7d" stroke-width="1.2" stroke-linecap="round" stroke-linejoin="round">
<path d="M0.6 4.4h17.4M5.3 4.2V2.2a1.4 1.4 0 0 1 1.4-1.4h5.2a1.4 1.4 0 0 1 1.4 1.4v2M2.9 4.8l1.5 12a1.5 1.5 0 0 0 1.5 1.4h6.8a1.5 1.5 0 0 0 1.5-1.4l1.5-12M7.2 9.2v5M11.4 9.2v5"/></svg><span style="position:absolute;left:576.50px;top:559.00px;font-size:16.2px;line-height:16.2px;font-weight:700;color:#111;white-space:nowrap;letter-spacing:0.832px;">15.000.000</span><div class="a" style="left:20px;top:587px;width:1312px;height:1px;background:#cdcfd8"></div><div class="a" style="left:313px;top:588px;width:442px;height:8px;background:#b6bac3"></div><span style="position:absolute;left:19.50px;top:650.00px;font-size:16.5px;line-height:16.5px;font-weight:400;color:#1480da;white-space:nowrap;letter-spacing:0.254px;-webkit-text-stroke:0.5px #1480da;">Hạch toán đồng thời</span><div class="a" style="left:20px;top:668px;width:153px;height:1px;background:#1480da"></div><svg style="left:1079px;top:647px" width="22" height="24" viewBox="0 0 22 24" fill="none" stroke="#1480da" stroke-width="2" stroke-linecap="round" stroke-linejoin="round">
<path d="M6.6 20.8H4.2a1.6 1.6 0 0 1-1.600-1.600V3.600a1.600 1.600 0 0 1 1.600-1.600h12a1.600 1.600 0 0 1 1.600 1.600v6.600"/>
<path d="M13.900 12.400v8.400M9.800 17.000l4.100 4.100 4.100-4.100"/></svg><span style="position:absolute;left:1111.00px;top:650.00px;font-size:16.5px;line-height:16.5px;font-weight:400;color:#1480da;white-space:nowrap;letter-spacing:0.093px;-webkit-text-stroke:0.5px #1480da;">Cập nhật hạch toán đồng thời</span><div class="a" style="left:20px;top:687px;width:1304px;height:33px;background:#e0e1fb"></div><div class="a" style="left:20px;top:720px;width:1304px;height:1px;background:#bfc2cc"></div><div class="a" style="left:20px;top:763px;width:1304px;height:1px;background:#c3c6cf"></div><div class="vl" style="left:319px;top:687px;height:33px;background:#c0c3cd"></div><div class="vd" style="left:319px;top:721px;height:46px"></div><div class="vl" style="left:439px;top:687px;height:33px;background:#c0c3cd"></div><div class="vd" style="left:439px;top:721px;height:46px"></div><div class="vl" style="left:559px;top:687px;height:33px;background:#c0c3cd"></div><div class="vd" style="left:559px;top:721px;height:46px"></div><div class="vl" style="left:739px;top:687px;height:33px;background:#c0c3cd"></div><div class="vd" style="left:739px;top:721px;height:46px"></div><div class="vl" style="left:902px;top:687px;height:33px;background:#c0c3cd"></div><div class="vd" style="left:902px;top:721px;height:46px"></div><div class="vl" style="left:1202px;top:687px;height:33px;background:#c0c3cd"></div><div class="vd" style="left:1202px;top:721px;height:46px"></div><div class="vl" style="left:1228px;top:687px;height:33px;background:#c0c3cd"></div><div class="vd" style="left:1228px;top:721px;height:46px"></div><svg style="left:30px;top:697.5px" width="8" height="13" viewBox="0 0 8 13" fill="none" stroke="#bfc1cb" stroke-width="1.2"><path d="M1.9 0.6h4.2v6.6H1.9zM0 7.3h8M4 7.6v5.4"/></svg><span style="position:absolute;left:48.25px;top:697.00px;font-size:15.8px;line-height:15.8px;font-weight:700;color:#161616;white-space:nowrap;letter-spacing:0.113px;">Diễn giải</span><svg style="left:299.5px;top:698.5px" width="11" height="12" viewBox="0 0 11 12" fill="none" stroke="#bfc1cb" stroke-width="1" stroke-linecap="round" stroke-linejoin="round"><path d="M2.7 11V0.8M0.3 3.3L2.7 0.7l2.4 2.6M8 0.8V11M5.6 8.5L8 11.1l2.4-2.6"/></svg><svg style="left:330.5px;top:697.5px" width="8" height="13" viewBox="0 0 8 13" fill="none" stroke="#bfc1cb" stroke-width="1.2"><path d="M1.9 0.6h4.2v6.6H1.9zM0 7.3h8M4 7.6v5.4"/></svg><span style="position:absolute;left:349.50px;top:697.00px;font-size:15.8px;line-height:15.8px;font-weight:700;color:#161616;white-space:nowrap;letter-spacing:-0.464px;">TK Nợ</span><svg style="left:419.5px;top:698.5px" width="11" height="12" viewBox="0 0 11 12" fill="none" stroke="#bfc1cb" stroke-width="1" stroke-linecap="round" stroke-linejoin="round"><path d="M2.7 11V0.8M0.3 3.3L2.7 0.7l2.4 2.6M8 0.8V11M5.6 8.5L8 11.1l2.4-2.6"/></svg><svg style="left:450.5px;top:697.5px" width="8" height="13" viewBox="0 0 8 13" fill="none" stroke="#bfc1cb" stroke-width="1.2"><path d="M1.9 0.6h4.2v6.6H1.9zM0 7.3h8M4 7.6v5.4"/></svg><span style="position:absolute;left:469.50px;top:697.00px;font-size:15.8px;line-height:15.8px;font-weight:700;color:#161616;white-space:nowrap;letter-spacing:-0.214px;">TK Có</span><svg style="left:539.5px;top:698.5px" width="11" height="12" viewBox="0 0 11 12" fill="none" stroke="#bfc1cb" stroke-width="1" stroke-linecap="round" stroke-linejoin="round"><path d="M2.7 11V0.8M0.3 3.3L2.7 0.7l2.4 2.6M8 0.8V11M5.6 8.5L8 11.1l2.4-2.6"/></svg><svg style="left:570.5px;top:697.5px" width="8" height="13" viewBox="0 0 8 13" fill="none" stroke="#bfc1cb" stroke-width="1.2"><path d="M1.9 0.6h4.2v6.6H1.9zM0 7.3h8M4 7.6v5.4"/></svg><svg style="left:719.5px;top:698.5px" width="11" height="12" viewBox="0 0 11 12" fill="none" stroke="#bfc1cb" stroke-width="1" stroke-linecap="round" stroke-linejoin="round"><path d="M2.7 11V0.8M0.3 3.3L2.7 0.7l2.4 2.6M8 0.8V11M5.6 8.5L8 11.1l2.4-2.6"/></svg><svg style="left:750.5px;top:697.5px" width="8" height="13" viewBox="0 0 8 13" fill="none" stroke="#bfc1cb" stroke-width="1.2"><path d="M1.9 0.6h4.2v6.6H1.9zM0 7.3h8M4 7.6v5.4"/></svg><span style="position:absolute;left:768.25px;top:697.00px;font-size:15.8px;line-height:15.8px;font-weight:700;color:#161616;white-space:nowrap;letter-spacing:0.184px;">Mã dự phòng</span><svg style="left:882.5px;top:698.5px" width="11" height="12" viewBox="0 0 11 12" fill="none" stroke="#bfc1cb" stroke-width="1" stroke-linecap="round" stroke-linejoin="round"><path d="M2.7 11V0.8M0.3 3.3L2.7 0.7l2.4 2.6M8 0.8V11M5.6 8.5L8 11.1l2.4-2.6"/></svg><svg style="left:913.5px;top:697.5px" width="8" height="13" viewBox="0 0 8 13" fill="none" stroke="#bfc1cb" stroke-width="1.2"><path d="M1.9 0.6h4.2v6.6H1.9zM0 7.3h8M4 7.6v5.4"/></svg><span style="position:absolute;left:931.50px;top:697.00px;font-size:15.8px;line-height:15.8px;font-weight:700;color:#161616;white-space:nowrap;letter-spacing:0.411px;">Nguồn</span><svg style="left:1182.5px;top:698.5px" width="11" height="12" viewBox="0 0 11 12" fill="none" stroke="#bfc1cb" stroke-width="1" stroke-linecap="round" stroke-linejoin="round"><path d="M2.7 11V0.8M0.3 3.3L2.7 0.7l2.4 2.6M8 0.8V11M5.6 8.5L8 11.1l2.4-2.6"/></svg><svg style="left:1213.5px;top:697.5px" width="8" height="13" viewBox="0 0 8 13" fill="none" stroke="#bfc1cb" stroke-width="1.2"><path d="M1.9 0.6h4.2v6.6H1.9zM0 7.3h8M4 7.6v5.4"/></svg><span style="position:absolute;left:639.50px;top:697.00px;font-size:15.8px;line-height:15.8px;font-weight:700;color:#161616;white-space:nowrap;letter-spacing:0.082px;">Số tiền</span><svg style="left:1288.2px;top:695px" width="19" height="19" viewBox="0 0 19 19" fill="none" stroke="#8a8a8a" stroke-width="1.2" stroke-linecap="round" stroke-linejoin="round">
<path d="M0.6 4.4h17.4M5.3 4.2V2.2a1.4 1.4 0 0 1 1.4-1.4h5.2a1.4 1.4 0 0 1 1.4 1.4v2M2.9 4.8l1.5 12a1.5 1.5 0 0 0 1.5 1.4h6.8a1.5 1.5 0 0 0 1.5-1.4l1.5-12"/>
<path d="M7.3 9.9l4 4M11.3 9.9l-4 4" stroke="#f0293b" stroke-width="1.3"/></svg><svg style="left:1253.0px;top:732.5px" width="19" height="19" viewBox="0 0 19 19" fill="none" stroke="#5a5a5a" stroke-width="1.1" stroke-linecap="round"><circle cx="9.5" cy="9.5" r="8.6"/><path d="M9.5 5.4v8.2M5.4 9.5h8.2"/></svg><svg style="left:1287.6px;top:732.6px" width="19.0" height="19.0" viewBox="0 0 19 19" fill="none" stroke="#7d7d7d" stroke-width="1.2" stroke-linecap="round" stroke-linejoin="round">
<path d="M0.6 4.4h17.4M5.3 4.2V2.2a1.4 1.4 0 0 1 1.4-1.4h5.2a1.4 1.4 0 0 1 1.4 1.4v2M2.9 4.8l1.5 12a1.5 1.5 0 0 0 1.5 1.4h6.8a1.5 1.5 0 0 0 1.5-1.4l1.5-12M7.2 9.2v5M11.4 9.2v5"/></svg><div class="a" style="left:1324px;top:687px;width:8px;height:81px;background:#b6bac3"></div><span style="position:absolute;left:33.25px;top:775.00px;font-size:16.0px;line-height:16.0px;font-weight:400;color:#141414;white-space:nowrap;letter-spacing:0.133px;">Tổng số: <b>0</b> bản ghi</span><div class="a" style="left:20px;top:802px;width:1303px;height:1px;background:#cdcfd8"></div><div class="a" style="left:20px;top:803px;width:418px;height:8px;background:#b6bac3"></div><div class="a" style="left:25px;top:827px;width:96px;height:39px;box-sizing:border-box;border:1px solid #fff;border-radius:4px"></div><span style="position:absolute;left:53.25px;top:839.00px;font-size:16.0px;line-height:16.0px;font-weight:700;color:#fff;white-space:nowrap;letter-spacing:-0.034px;">Đóng</span><div class="a" style="left:1123px;top:827px;width:96px;height:39px;box-sizing:border-box;border:1px solid #fff;border-radius:4px"></div><span style="position:absolute;left:1150.50px;top:839.00px;font-size:16.0px;line-height:16.0px;font-weight:700;color:#fff;white-space:nowrap;letter-spacing:0.258px;">Hoãn</span><div class="a" style="left:1231px;top:827px;width:96px;height:39px;border-radius:4px;background:#5f5eea"></div><span style="position:absolute;left:1266.50px;top:839.00px;font-size:16.0px;line-height:16.0px;font-weight:700;color:#fff;white-space:nowrap;letter-spacing:-0.477px;">Cất</span><svg style="left:330px;top:833px" width="27" height="27" viewBox="0 0 27 27" fill="none" stroke="#94969f" stroke-width="1.7" stroke-linecap="round" stroke-linejoin="round">
<path d="M23.6 13.9A10.4 10.4 0 1 1 19.6 5.6"/><path d="M22.4 1.9v6.3h-6.3"/></svg><span style="position:absolute;left:363.50px;top:839.00px;font-size:16.0px;line-height:16.0px;font-weight:700;color:#94969f;white-space:nowrap;letter-spacing:0.523px;">Nạp</span><div class="a" style="left:423.2px;top:837px;width:1.7px;height:19px;background:#575a6b"></div><svg style="left:450.4px;top:834.4px" width="25" height="25" viewBox="0 0 25 25" fill="none" stroke="#fff" stroke-width="1.9"><circle cx="12.4" cy="12.4" r="10.9"/>
<g fill="#fff" stroke="none"><circle cx="12.4" cy="8.2" r="1.15"/><circle cx="12.4" cy="12.4" r="1.15"/><circle cx="12.4" cy="16.6" r="1.15"/></g></svg><span style="position:absolute;left:485.50px;top:839.00px;font-size:16.0px;line-height:16.0px;font-weight:700;color:#fff;white-space:nowrap;letter-spacing:-0.127px;">Tiện ích</span><svg style="left:558.20px;top:842.30px" width="9.4" height="5.8" viewBox="0 0 9.4 5.8"><path d="M0 0H9.4L4.7 5.8z" fill="#fff"/></svg><div class="a" style="left:595.2px;top:837px;width:1.7px;height:19px;background:#575a6b"></div><svg style="left:621.5px;top:834px" width="26" height="26" viewBox="0 0 26 26" fill="none" stroke="#94969f" stroke-width="1.7" stroke-linecap="round" stroke-linejoin="round">
<path d="M6 8V2.6a.8.8 0 0 1 .8-.8h11.6a.8.8 0 0 1 .8.8V8"/><path d="M6 18.6H3.6a1.8 1.8 0 0 1-1.8-1.8V9.9A1.8 1.8 0 0 1 3.600 8.100h18a1.8 1.8 0 0 1 1.800 1.800v6.900a1.8 1.800 0 0 1-1.800 1.800H19.200"/><rect x="6" y="14.4" width="13.2" height="9.400" rx=".8"/></svg><span style="position:absolute;left:655.50px;top:839.00px;font-size:16.0px;line-height:16.0px;font-weight:700;color:#94969f;white-space:nowrap;letter-spacing:0.305px;">In</span><svg style="left:690.70px;top:842.30px" width="9.4" height="5.8" viewBox="0 0 9.4 5.8"><path d="M0 0H9.4L4.7 5.8z" fill="#94969f"/></svg><div class="a" style="left:719.5px;top:837px;width:1.7px;height:19px;background:#575a6b"></div><svg style="left:740.4px;top:834px" width="22" height="25" viewBox="0 0 22 25" fill="none" stroke="#94969f" stroke-width="1.7" stroke-linecap="round" stroke-linejoin="round">
<path d="M13.6 1.6H3.4A1.6 1.6 0 0 0 1.800 3.200v18.400a1.600 1.600 0 0 0 1.600 1.600h14.400a1.600 1.600 0 0 0 1.600-1.600V7.400z"/><path d="M13.6 1.600v5.800h5.800M6 11h4.200M6 15h9.400M6 18.800h9.400"/></svg><span style="position:absolute;left:772.25px;top:839.00px;font-size:16.0px;line-height:16.0px;font-weight:700;color:#94969f;white-space:nowrap;letter-spacing:-0.031px;">Duyệt</span><div class="a" style="left:845.5px;top:837px;width:1.7px;height:19px;background:#575a6b"></div><svg style="left:866.2px;top:834.4px" width="23.94" height="23.94" viewBox="0 0 19 19" fill="none" stroke="#94969f" stroke-width="1.349206349206349" stroke-linecap="round" stroke-linejoin="round">
<path d="M0.6 4.4h17.4M5.3 4.2V2.2a1.4 1.4 0 0 1 1.4-1.4h5.2a1.4 1.4 0 0 1 1.4 1.4v2M2.9 4.8l1.5 12a1.5 1.5 0 0 0 1.5 1.4h6.8a1.5 1.5 0 0 0 1.5-1.4l1.5-12M7.2 9.2v5M11.4 9.2v5"/></svg><span style="position:absolute;left:901.25px;top:839.00px;font-size:16.0px;line-height:16.0px;font-weight:700;color:#94969f;white-space:nowrap;letter-spacing:-0.598px;">Xóa</span><div class="a" style="left:1px;top:1px;width:1350px;height:1px;background:#fff"></div><div class="a" style="left:1px;top:1px;width:1px;height:819px;background:#fff"></div><div class="a" style="left:1350px;top:1px;width:1px;height:413px;background:#fff"></div><div class="a" style="left:0;top:0;width:1352px;height:874px;box-sizing:border-box;border:1px solid #000"></div></body></html>
